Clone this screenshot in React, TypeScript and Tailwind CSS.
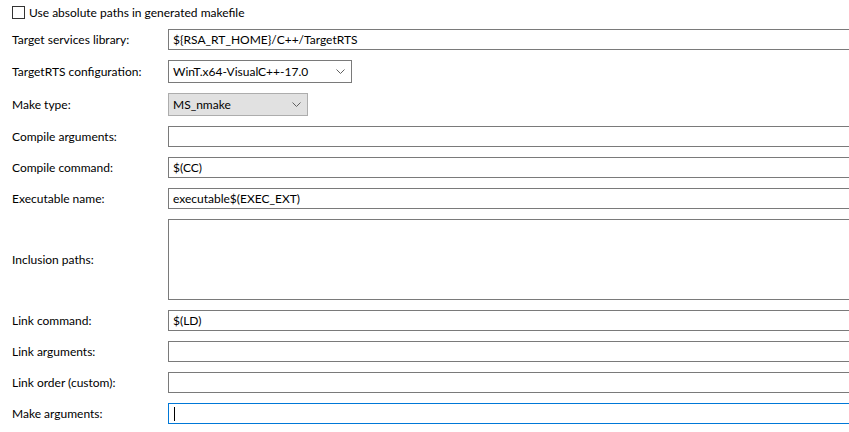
import React from 'react';

const font = { fontFamily: 'Lato, "Noto Sans", sans-serif' };

const Chevron: React.FC = () => (
  <svg width="9" height="5" viewBox="0 0 9 5" className="shrink-0">
    <path d="M0.5 0.5 L4.5 4.5 L8.5 0.5" fill="none" stroke="#606060" strokeWidth="1" />
  </svg>
);

const Row: React.FC<{ label: string; height?: string; children: React.ReactNode }> = ({ label, height = 'h-[21px]', children }) => (
  <div className={`flex items-center ${height}`}>
    <div className="w-[168px] shrink-0 pl-3 text-black">{label}</div>
    {children}
  </div>
);

const TextBox: React.FC<{ value?: string; tall?: boolean; focused?: boolean }> = ({ value, tall, focused }) => (
  <div
    className={`w-[720px] shrink-0 border bg-white pl-1 flex ${tall ? 'h-[81px] items-start' : 'h-[21px] items-center'} ${
      focused ? 'border-[#0078d7]' : 'border-[#7a7a7a]'
    }`}
  >
    {value && <span className="leading-none">{value}</span>}
    {focused && <span className="ml-px h-[14px] w-px bg-black" />}
  </div>
);

export default function App() {
  return (
    <div className="w-[849px] h-[432px] overflow-hidden bg-white text-[12px] text-black" style={font}>
      <div className="flex items-center gap-[4px] pl-3 pt-[4px] h-[17px] box-content">
        <span className="h-[13px] w-[13px] border border-[#333333] bg-white" />
        <span>Use absolute paths in generated makefile</span>
      </div>

      <div className="flex flex-col gap-[10px] pt-[8px]">
        <Row label="Target services library:">
          <TextBox value="${RSA_RT_HOME}/C++/TargetRTS" />
        </Row>

        <Row label="TargetRTS configuration:" height="h-[23px]">
          <div className="flex h-[23px] w-[184px] items-center justify-between border border-[#7a7a7a] bg-white pl-1 pr-[6px]">
            <span>WinT.x64-VisualC++-17.0</span>
            <Chevron />
          </div>
        </Row>

        <Row label="Make type:" height="h-[23px]">
          <div className="flex h-[23px] w-[140px] items-center justify-between border border-[#adadad] bg-[#e1e1e1] pl-1 pr-[6px]">
            <span>MS_nmake</span>
            <Chevron />
          </div>
        </Row>

        <Row label="Compile arguments:">
          <TextBox />
        </Row>
        <Row label="Compile command:">
          <TextBox value="$(CC)" />
        </Row>
        <Row label="Executable name:">
          <TextBox value="executable$(EXEC_EXT)" />
        </Row>
        <Row label="Inclusion paths:" height="h-[81px]">
          <TextBox tall />
        </Row>
        <Row label="Link command:">
          <TextBox value="$(LD)" />
        </Row>
        <Row label="Link arguments:">
          <TextBox />
        </Row>
        <Row label="Link order (custom):">
          <TextBox />
        </Row>
        <Row label="Make arguments:">
          <TextBox focused />
        </Row>
      </div>
    </div>
  );
}
